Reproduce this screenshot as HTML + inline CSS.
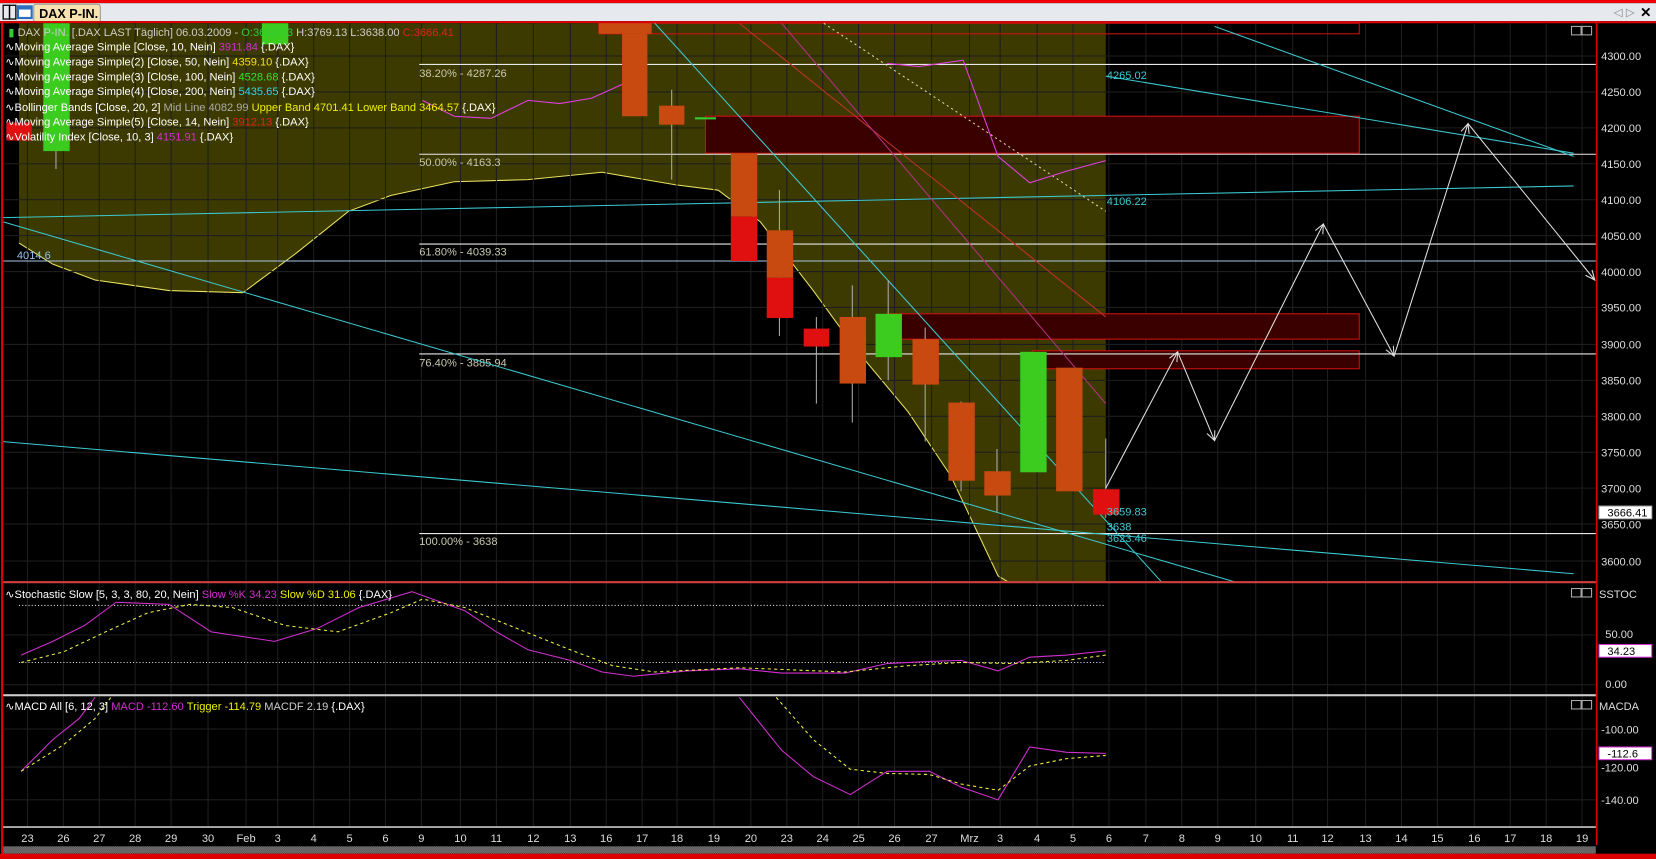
<!DOCTYPE html>
<html><head><meta charset="utf-8"><style>
html,body{margin:0;padding:0;background:#000;overflow:hidden}
svg{display:block}
text{font-family:"Liberation Sans",sans-serif;font-size:10.5px}
</style></head><body>
<svg width="1656" height="859" viewBox="0 0 1568 813" preserveAspectRatio="none" xmlns="http://www.w3.org/2000/svg">
<defs>
<pattern id="h" width="2" height="2" patternUnits="userSpaceOnUse"><rect width="2" height="2" fill="#333"/><rect width="1" height="1" fill="#999"/><rect x="1" y="1" width="1" height="1" fill="#999"/></pattern>
<marker id="ar" markerWidth="10" markerHeight="10" refX="9" refY="5" orient="auto" markerUnits="userSpaceOnUse"><path d="M0 1 L9 5 L0 9" fill="none" stroke="#e0e0e0"/></marker>
</defs>
<rect x="0" y="0" width="1568" height="813" fill="#000"/>
<rect x="0" y="0" width="1568" height="3" fill="#e00"/>
<rect x="0" y="3" width="1568" height="17" fill="#e6e9ee"/>
<rect x="3" y="5" width="6" height="13" fill="none" stroke="#000" stroke-width="1.2"/>
<rect x="9" y="5" width="6" height="13" fill="none" stroke="#000" stroke-width="1.2"/>
<rect x="16" y="5" width="15" height="13" fill="#2a6ec0"/>
<rect x="18" y="9" width="11" height="7" fill="#fff"/>
<path d="M32 20 V6 Q32 4 34 4 H92 Q95 4 95 7 V20" fill="#f8e2b0" stroke="#999"/>
<text x="37" y="17" style="font-size:12px;font-weight:bold" fill="#000">DAX P-IN.</text>
<text x="1528" y="15" fill="#888" style="font-size:11px">◁ ▷</text>
<text x="1553" y="16" fill="#000" style="font-size:13px;font-weight:bold">✕</text>
<rect x="0" y="20" width="1568" height="2" fill="#d00"/>
<rect x="1" y="20" width="2" height="793" fill="#d00"/>
<rect x="1511" y="20" width="1.5" height="780" fill="#d00"/>
<rect x="18" y="22" width="1029" height="529" fill="#3d3a00"/>
<path d="M18 230 L50 250 L90 265 L160 275 L230 277 L280 240 L330 200 L370 185 L430 172 L500 170 L570 163 L640 175 L680 180 L720 210 L770 275 L810 330 L860 390 L900 450 L945 545 L948 551 L18 551 Z" fill="#000"/>
<path d="M18 230 L50 250 L90 265 L160 275 L230 277 L280 240 L330 200 L370 185 L430 172 L500 170 L570 163 L640 175 L680 180 L720 210 L770 275 L810 330 L860 390 L900 450 L945 545 L955 551" fill="none" stroke="#e8e060" stroke-width="1"/>
<g stroke="#1e1e1e" stroke-width="1">
<path d="M26 22V783M60 22V783M94 22V783M128 22V783M162 22V783M197 22V783M233 22V783M263 22V783M297 22V783M331 22V783M365 22V783M399 22V783M436 22V783M470 22V783M505 22V783M540 22V783M574 22V783M608 22V783M641 22V783M676 22V783M711 22V783M745 22V783M779 22V783M813 22V783M847 22V783M882 22V783M918 22V783M947 22V783M982 22V783M1016 22V783M1050 22V783M1085 22V783M1119 22V783M1153 22V783M1189 22V783M1224 22V783M1257 22V783M1293 22V783M1327 22V783M1361 22V783M1396 22V783M1430 22V783M1464 22V783M1498 22V783"/>
<path d="M3 53H1511M3 87H1511M3 121H1511M3 155H1511M3 189H1511M3 223H1511M3 257H1511M3 291H1511M3 326H1511M3 360H1511M3 394H1511M3 428H1511M3 462H1511M3 496H1511M3 531H1511M3 601H1511M3 648H1511M3 690H1511M3 726H1511M3 757H1511"/>
</g>
<g stroke="#d01010" stroke-width="1">
<rect x="567" y="22" width="720" height="10" fill="none"/>
<rect x="668" y="110" width="619" height="35" fill="#3a0000"/>
<rect x="840" y="297" width="447" height="24" fill="#3a0000"/>
<rect x="978" y="332" width="309" height="17" fill="#3a0000"/>
</g>
<g stroke="#e8e8e8" stroke-width="1">
<path d="M397 61H1511M397 146H1511M397 231H1511M397 335H1511M397 505H1511"/>
</g>
<path d="M3 247H1511" stroke="#a8c8e8"/>
<g fill="#c8c8b0">
<text x="397" y="73">38.20% - 4287.26</text>
<text x="397" y="157">50.00% - 4163.3</text>
<text x="397" y="242">61.80% - 4039.33</text>
<text x="397" y="347">76.40% - 3885.94</text>
<text x="397" y="516">100.00% - 3638</text>
</g>
<text x="16" y="245" fill="#8fc0e8">4014.6</text>
<g stroke="#3cc8d0" stroke-width="1" fill="none">
<path d="M3 210 L1170 551"/>
<path d="M3 418 L1490 543"/>
<path d="M3 206 L1490 176"/>
<path d="M1150 25 L1490 148"/>
<path d="M1047 72 L1490 145"/>
<path d="M620 22 L1100 551"/>
</g>
<path d="M700 22 L1047 300" stroke="#c03030" fill="none"/>
<path d="M740 22 L1047 382" stroke="#b03080" fill="none"/>
<path d="M780 22 L1047 200" stroke="#d8d8a0" stroke-dasharray="2,3" fill="none"/>
<path d="M400 95 L430 110 L465 112 L500 95 L530 98 L560 93 L600 75 L612 22 M840 60 L870 63 L912 57 L945 148 L975 173 L1010 162 L1047 152" stroke="#e040e0" fill="none"/>
<g stroke="#aaa" stroke-width="1">
<path d="M636 85V170M738 180V318M773 300V382M807 270V400M841 265V360M876 310V418M910 380V465M944 425V485M1047 415V490M53 130V160"/>
</g>
<rect x="589" y="32" width="24" height="78" fill="#c84a10"/>
<rect x="624" y="100" width="24" height="18" fill="#c84a10"/>
<rect x="658" y="111" width="20" height="2" fill="#3c3"/>
<rect x="692" y="145" width="25" height="60" fill="#c84a10"/>
<rect x="692" y="205" width="25" height="42" fill="#e01010"/>
<rect x="726" y="218" width="25" height="45" fill="#c84a10"/>
<rect x="726" y="263" width="25" height="38" fill="#e01010"/>
<rect x="761" y="311" width="24" height="17" fill="#e01010"/>
<rect x="795" y="300" width="25" height="63" fill="#c84a10"/>
<rect x="829" y="297" width="25" height="41" fill="#3ccc20"/>
<rect x="864" y="321" width="25" height="43" fill="#c84a10"/>
<rect x="898" y="381" width="25" height="74" fill="#c84a10"/>
<rect x="932" y="446" width="25" height="23" fill="#c84a10"/>
<rect x="966" y="333" width="25" height="114" fill="#3ccc20"/>
<rect x="1000" y="348" width="25" height="117" fill="#c84a10"/>
<rect x="1035" y="463" width="25" height="24" fill="#e01010"/>
<rect x="41" y="22" width="25" height="121" fill="#3ccc20"/>
<rect x="248" y="22" width="25" height="20" fill="#3ccc20"/>
<rect x="6" y="116" width="24" height="17" fill="#e01010"/>
<rect x="567" y="22" width="50" height="10" fill="#c84a10"/>
<g stroke="#e0e0e0" fill="none" marker-end="url(#ar)">
<path d="M1047 462 L1115 333"/><path d="M1115 333 L1150 417"/><path d="M1150 417 L1253 212"/><path d="M1253 212 L1320 337"/><path d="M1320 337 L1390 117"/><path d="M1390 117 L1510 265"/>
</g>
<g fill="#3cc8d0">
<text x="1048" y="75">4265.02</text>
<text x="1048" y="194">4106.22</text>
<text x="1048" y="488">3659.83</text>
<text x="1048" y="502">3638</text>
<text x="1048" y="513">3623.46</text>
</g>
<g>
<text x="8" y="34" fill="#ccc"><tspan fill="#3c3">▮</tspan> DAX P-IN. [.DAX LAST Täglich] 06.03.2009 - <tspan fill="#3c3">O:3699.93</tspan> H:3769.13 L:3638.00 <tspan fill="#e02020">C:3666.41</tspan></text>
<text x="5" y="48" fill="#fff">∿Moving Average Simple [Close, 10, Nein] <tspan fill="#d030d0">3911.84</tspan> {.DAX}</text>
<text x="5" y="62" fill="#fff">∿Moving Average Simple(2) [Close, 50, Nein] <tspan fill="#f0e000">4359.10</tspan> {.DAX}</text>
<text x="5" y="76" fill="#fff">∿Moving Average Simple(3) [Close, 100, Nein] <tspan fill="#30e030">4528.68</tspan> {.DAX}</text>
<text x="5" y="90" fill="#fff">∿Moving Average Simple(4) [Close, 200, Nein] <tspan fill="#30d8e0">5435.65</tspan> {.DAX}</text>
<text x="5" y="105" fill="#fff">∿Bollinger Bands [Close, 20, 2] <tspan fill="#aaa">Mid Line 4082.99</tspan> <tspan fill="#f0f000">Upper Band 4701.41 Lower Band 3464.57</tspan> {.DAX}</text>
<text x="5" y="119" fill="#fff">∿Moving Average Simple(5) [Close, 14, Nein] <tspan fill="#e02020">3912.13</tspan> {.DAX}</text>
<text x="5" y="133" fill="#fff">∿Volatility Index [Close, 10, 3] <tspan fill="#d030d0">4151.91</tspan> {.DAX}</text>
</g>
<g fill="#ddd">
<text x="1516" y="57">4300.00</text><text x="1516" y="91">4250.00</text><text x="1516" y="125">4200.00</text>
<text x="1516" y="159">4150.00</text><text x="1516" y="193">4100.00</text><text x="1516" y="227">4050.00</text>
<text x="1516" y="261">4000.00</text><text x="1516" y="295">3950.00</text><text x="1516" y="330">3900.00</text>
<text x="1516" y="364">3850.00</text><text x="1516" y="398">3800.00</text><text x="1516" y="432">3750.00</text>
<text x="1516" y="466">3700.00</text><text x="1516" y="500">3650.00</text><text x="1516" y="535">3600.00</text>
<text x="1520" y="604">50.00</text><text x="1520" y="651">0.00</text>
<text x="1516" y="694">-100.00</text><text x="1516" y="730">-120.00</text><text x="1516" y="761">-140.00</text>
<text x="1514" y="566">SSTOC</text><text x="1514" y="672">MACDA</text>
</g>
<rect x="1514" y="479" width="50" height="12" fill="#fff" stroke="#aaa"/>
<text x="1522" y="489" fill="#000">3666.41</text>
<rect x="1514" y="610" width="50" height="12" fill="#fff" stroke="#d030d0"/>
<text x="1522" y="620" fill="#000">34.23</text>
<rect x="1514" y="707" width="50" height="12" fill="#fff" stroke="#d030d0"/>
<text x="1522" y="717" fill="#000">-112.6</text>
<g fill="none" stroke="#aaa"><rect x="1488" y="25" width="9" height="8"/><rect x="1498" y="25" width="9" height="8"/><rect x="1488" y="557" width="9" height="8"/><rect x="1498" y="557" width="9" height="8"/><rect x="1488" y="663" width="9" height="8"/><rect x="1498" y="663" width="9" height="8"/></g>
<rect x="3" y="550" width="1508" height="2" fill="#d04040"/>
<rect x="3" y="657" width="1508" height="2" fill="#ccc"/>
<path d="M18 573H1047M18 627H1047" stroke="#ddd" stroke-dasharray="1,2"/>
<path d="M20 620 L50 607 L80 592 L110 570 L160 572 L200 598 L260 607 L300 595 L340 575 L390 560 L440 578 L470 598 L500 615 L540 625 L570 636 L600 640 L650 635 L700 633 L740 637 L800 637 L840 628 L880 626 L910 625 L945 635 L975 622 L1010 620 L1047 616" stroke="#d030d0" fill="none"/>
<path d="M20 627 L60 617 L100 598 L140 580 L180 572 L220 575 L270 592 L320 598 L370 580 L400 567 L440 575 L490 595 L540 615 L580 630 L620 636 L700 632 L800 636 L860 630 L910 627 L960 628 L1010 625 L1047 620" stroke="#f0f040" stroke-dasharray="3,3" fill="none"/>
<text x="5" y="566" fill="#fff">∿Stochastic Slow [5, 3, 3, 80, 20, Nein] <tspan fill="#d030d0">Slow %K 34.23</tspan> <tspan fill="#f0f000">Slow %D 31.06</tspan> {.DAX}</text>
<path d="M20 730 L50 700 L75 680 L90 660 M700 660 L740 710 L770 735 L805 752 L840 730 L880 730 L910 745 L945 757 L975 707 L1010 712 L1047 713" stroke="#d030d0" fill="none"/>
<path d="M20 730 L60 705 L90 680 L105 660 M735 660 L770 700 L805 728 L840 732 L880 733 L910 742 L945 748 L975 725 L1010 718 L1047 715" stroke="#f0f040" stroke-dasharray="3,3" fill="none"/>
<text x="5" y="672" fill="#fff">∿MACD All [6, 12, 3] <tspan fill="#d030d0">MACD -112.60</tspan> <tspan fill="#f0f000">Trigger -114.79</tspan> <tspan fill="#ccc">MACDF 2.19</tspan> {.DAX}</text>
<rect x="3" y="782" width="1508" height="1.5" fill="#ccc"/>
<g fill="#ddd" text-anchor="middle">
<text x="26" y="797">23</text><text x="60" y="797">26</text><text x="94" y="797">27</text><text x="128" y="797">28</text><text x="162" y="797">29</text><text x="197" y="797">30</text><text x="233" y="797">Feb</text><text x="263" y="797">3</text><text x="297" y="797">4</text><text x="331" y="797">5</text><text x="365" y="797">6</text><text x="399" y="797">9</text><text x="436" y="797">10</text><text x="470" y="797">11</text><text x="505" y="797">12</text><text x="540" y="797">13</text><text x="574" y="797">16</text><text x="608" y="797">17</text><text x="641" y="797">18</text><text x="676" y="797">19</text><text x="711" y="797">20</text><text x="745" y="797">23</text><text x="779" y="797">24</text><text x="813" y="797">25</text><text x="847" y="797">26</text><text x="882" y="797">27</text><text x="918" y="797">Mrz</text><text x="947" y="797">3</text><text x="982" y="797">4</text><text x="1016" y="797">5</text><text x="1050" y="797">6</text><text x="1085" y="797">7</text><text x="1119" y="797">8</text><text x="1153" y="797">9</text><text x="1189" y="797">10</text><text x="1224" y="797">11</text><text x="1257" y="797">12</text><text x="1293" y="797">13</text><text x="1327" y="797">14</text><text x="1361" y="797">15</text><text x="1396" y="797">16</text><text x="1430" y="797">17</text><text x="1464" y="797">18</text><text x="1498" y="797">19</text>
</g>
<rect x="3" y="801" width="1508" height="7" fill="url(#h)"/>
<rect x="0" y="808" width="1568" height="5" fill="#d00"/>
</svg>
</body></html>
